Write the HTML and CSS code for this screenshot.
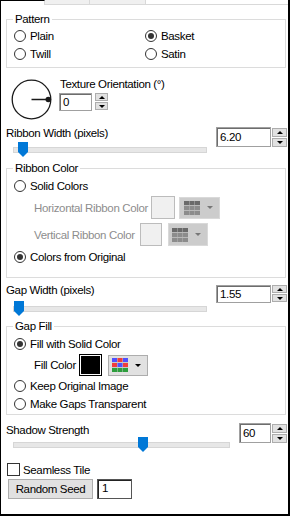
FILE: index.html
```html
<!DOCTYPE html>
<html lang="en">
<head>
    <meta charset="UTF-8">
    <title>Weave Settings</title>
    <link rel="stylesheet" href="styles.css">
</head>
<body>
<div class="panel">
    <div class="tabs">
        <div class="tab active"></div>
        <div class="tab"></div>
        <div class="tab wide"></div>
        <div class="tab-fill"></div>
    </div>

    <fieldset class="group pattern">
        <legend>Pattern</legend>
        <div class="pattern-grid">
            <div class="radio"><span class="dot"></span>Plain</div>
            <div class="radio checked"><span class="dot"></span>Basket</div>
            <div class="radio"><span class="dot"></span>Twill</div>
            <div class="radio"><span class="dot"></span>Satin</div>
        </div>
    </fieldset>

    <div class="orient">
        <svg class="dial" width="42" height="42" viewBox="0 0 42 42">
            <circle cx="21.5" cy="21.5" r="19.3" fill="none" stroke="#1a1a1a" stroke-width="1.3"/>
            <line x1="21.5" y1="21.5" x2="38" y2="21.5" stroke="#1a1a1a" stroke-width="1.5"/>
            <circle cx="38.3" cy="21.5" r="2.8" fill="#1a1a1a"/>
        </svg>
        <div class="orient-body">
            <div class="caption">Texture Orientation (°)</div>
            <div class="spin small">
                <div class="field narrow">0</div>
                <div class="arrows">
                    <span class="arrow up"></span>
                    <span class="arrow down"></span>
                </div>
            </div>
        </div>
    </div>

    <div class="slider-row ribbon">
        <div class="slider-col">
            <div class="caption">Ribbon Width (pixels)</div>
            <div class="track">
                <svg class="thumb" style="left: 5px" width="10" height="15" viewBox="0 0 10 15"><polygon points="0,0 10,0 10,10 5,15 0,10" fill="#0078d7"/></svg>
            </div>
        </div>
        <div class="spin">
            <div class="field wide tall">6.20</div>
            <div class="arrows tall">
                <span class="arrow up"></span>
                <span class="arrow down"></span>
            </div>
        </div>
    </div>

    <fieldset class="group ribbon-color">
        <legend>Ribbon Color</legend>
        <div class="radio"><span class="dot"></span>Solid Colors</div>
        <div class="pick-row first">
            <span class="name h">Horizontal Ribbon Color</span>
            <span class="swatch"></span>
            <span class="menu-btn disabled">
                <svg width="16" height="14" viewBox="0 0 16 14">
                    <rect width="16" height="14" fill="#b9b9b9"/>
                    <rect x="0" y="0" width="5" height="4" fill="#6a6a6a"/><rect x="5.5" y="0" width="5" height="4" fill="#6a6a6a"/><rect x="11" y="0" width="5" height="4" fill="#6a6a6a"/>
                    <rect x="0" y="5" width="5" height="4" fill="#8c8c8c"/><rect x="5.5" y="5" width="5" height="4" fill="#8c8c8c"/><rect x="11" y="5" width="5" height="4" fill="#8c8c8c"/>
                    <rect x="0" y="10" width="5" height="4" fill="#8c8c8c"/><rect x="5.5" y="10" width="5" height="4" fill="#8c8c8c"/><rect x="11" y="10" width="5" height="4" fill="#8c8c8c"/>
                </svg>
                <span class="caret"></span>
            </span>
        </div>
        <div class="pick-row">
            <span class="name v">Vertical Ribbon Color</span>
            <span class="swatch v"></span>
            <span class="menu-btn disabled">
                <svg width="16" height="14" viewBox="0 0 16 14">
                    <rect width="16" height="14" fill="#b9b9b9"/>
                    <rect x="0" y="0" width="5" height="4" fill="#6a6a6a"/><rect x="5.5" y="0" width="5" height="4" fill="#6a6a6a"/><rect x="11" y="0" width="5" height="4" fill="#6a6a6a"/>
                    <rect x="0" y="5" width="5" height="4" fill="#8c8c8c"/><rect x="5.5" y="5" width="5" height="4" fill="#8c8c8c"/><rect x="11" y="5" width="5" height="4" fill="#8c8c8c"/>
                    <rect x="0" y="10" width="5" height="4" fill="#8c8c8c"/><rect x="5.5" y="10" width="5" height="4" fill="#8c8c8c"/><rect x="11" y="10" width="5" height="4" fill="#8c8c8c"/>
                </svg>
                <span class="caret"></span>
            </span>
        </div>
        <div class="radio checked gap-top"><span class="dot"></span>Colors from Original</div>
    </fieldset>

    <div class="slider-row gap">
        <div class="slider-col">
            <div class="caption">Gap Width (pixels)</div>
            <div class="track">
                <svg class="thumb" style="left: 1px" width="10" height="15" viewBox="0 0 10 15"><polygon points="0,0 10,0 10,10 5,15 0,10" fill="#0078d7"/></svg>
            </div>
        </div>
        <div class="spin">
            <div class="field wide">1.55</div>
            <div class="arrows">
                <span class="arrow up"></span>
                <span class="arrow down"></span>
            </div>
        </div>
    </div>

    <fieldset class="group gap-fill">
        <legend>Gap Fill</legend>
        <div class="radio checked"><span class="dot"></span>Fill with Solid Color</div>
        <div class="fill-row">
            <span class="name">Fill Color</span>
            <span class="swatch black"></span>
            <span class="menu-btn">
                <svg width="16" height="14" viewBox="0 0 16 14">
                    <rect width="16" height="14" fill="#c8c8c8"/>
                    <rect x="0" y="0" width="5" height="4" fill="#5050ff"/><rect x="5.5" y="0" width="5" height="4" fill="#f03c3c"/><rect x="11" y="0" width="5" height="4" fill="#5050ff"/>
                    <rect x="0" y="5" width="5" height="4" fill="#f03c3c"/><rect x="5.5" y="5" width="5" height="4" fill="#5050ff"/><rect x="11" y="5" width="5" height="4" fill="#f03c3c"/>
                    <rect x="0" y="10" width="5" height="4" fill="#2e9e3e"/><rect x="5.5" y="10" width="5" height="4" fill="#2e9e3e"/><rect x="11" y="10" width="5" height="4" fill="#2e9e3e"/>
                </svg>
                <span class="caret"></span>
            </span>
        </div>
        <div class="radio gap-top1"><span class="dot"></span>Keep Original Image</div>
        <div class="radio"><span class="dot"></span>Make Gaps Transparent</div>
    </fieldset>

    <div class="slider-row shadow">
        <div class="slider-col">
            <div class="caption">Shadow Strength</div>
            <div class="track">
                <svg class="thumb" style="left: 125px" width="10" height="15" viewBox="0 0 10 15"><polygon points="0,0 10,0 10,10 5,15 0,10" fill="#0078d7"/></svg>
            </div>
        </div>
        <div class="spin">
            <div class="field short tall">60</div>
            <div class="arrows tall">
                <span class="arrow up"></span>
                <span class="arrow down"></span>
            </div>
        </div>
    </div>

    <div class="check-row"><span class="box"></span>Seamless Tile</div>

    <div class="seed-row">
        <span class="button">Random Seed</span>
        <span class="seed">1</span>
    </div>
</div>
</body>
</html>
```

FILE: styles.css
```css
* {
    box-sizing: border-box;
}
body {
    margin: 0;
    font-family: "Liberation Sans", Arial, sans-serif;
    font-size: 11.5px;
    letter-spacing: -0.35px;
    color: #000;
    background: #fff;
}
.panel {
    width: 290px;
    height: 516px;
    border: 2px solid #000;
    border-top: 0;
    border-left-width: 1px;
    background: #fff;
    overflow: hidden;
}

/* tab strip */
.tabs {
    display: flex;
    height: 5px;
}
.tab {
    width: 45px;
    background: #f0f0f0;
    border-right: 1px solid #d9d9d9;
    border-bottom: 1px solid #d9d9d9;
}
.tab.active {
    width: 44px;
    background: #fff;
    border-bottom: 0;
    border-top: 1px solid #000;
}
.tab.wide { width: 56px; }
.tab-fill {
    flex: 1;
    border-bottom: 1px solid #d9d9d9;
}

/* group boxes */
.group {
    margin: 0 2px 0 5px;
    padding: 2px 0 1px 6px;
    border: 1px solid #dcdcdc;
    min-width: 0;
}
.group legend {
    padding: 0 2px;
    line-height: 14px;
}
.pattern {
    margin-top: 7px;
    padding-top: 1px;
    padding-bottom: 4px;
}
.pattern-grid {
    display: grid;
    grid-template-columns: 131px 1fr;
}
.ribbon-color {
    margin-top: 3px;
    padding-bottom: 11px;
}
.gap-fill {
    margin-top: 2px;
}

.radio {
    display: flex;
    align-items: center;
    height: 18px;
    gap: 4px;
    padding-left: 1px;
}
.radio .dot {
    width: 12px;
    height: 12px;
    border: 1px solid #333;
    border-radius: 50%;
    background: #fff;
    display: flex;
    align-items: center;
    justify-content: center;
}
.radio.checked .dot::after {
    content: "";
    width: 6px;
    height: 6px;
    border-radius: 50%;
    background: #333;
}
.gap-top { margin-top: 2px; }
.gap-top1 { margin-top: 1px; }

/* orientation dial */
.orient {
    display: flex;
    margin-top: 10px;
}
.dial {
    margin-left: 9px;
    display: block;
}
.orient-body {
    margin-left: 8px;
}
.orient-body .caption {
    line-height: 13px;
}

/* spinners */
.spin {
    display: flex;
    gap: 1px;
    margin-left: auto;
    margin-right: 1px;
}
.spin.small {
    gap: 3px;
    margin: 2px 0 0 -1px;
}
.field {
    height: 18px;
    border: 1px solid #a0a0a0;
    box-shadow: inset 1px 1px 0 #6d6d6d;
    padding-left: 3px;
    line-height: 17px;
    background: #fff;
}
.field.narrow { width: 33px; }
.field.wide { width: 55px; }
.field.short { width: 32px; }
.field.tall {
    height: 20px;
    line-height: 19px;
}
.arrows {
    display: flex;
    flex-direction: column;
    gap: 1px;
}
.arrows.tall {
    padding-top: 1px;
}
.arrow {
    width: 15px;
    height: 8px;
    background: #e1e1e1;
    border: 1px solid #adadad;
    display: flex;
    align-items: center;
    justify-content: center;
}
.arrows.tall .arrow { height: 9px; }
.spin.small .arrow {
    width: 13px;
}
.arrow::after {
    content: "";
    width: 0;
    height: 0;
    border-left: 3px solid transparent;
    border-right: 3px solid transparent;
}
.arrow.up::after { border-bottom: 3px solid #000; }
.arrow.down::after { border-top: 3px solid #000; }

/* sliders */
.slider-row {
    display: flex;
    align-items: flex-start;
    padding-left: 5px;
}
.slider-col {
    flex: 1;
}
.slider-col .caption {
    line-height: 14px;
}
.track {
    position: relative;
    height: 16px;
    margin: 2px 9px 0 7px;
}
.track::before {
    content: "";
    position: absolute;
    left: 0;
    right: 0;
    top: 5px;
    height: 4px;
    background: #e7e7e7;
    border: 1px solid #d6d6d6;
}
.thumb {
    position: absolute;
    top: 0;
}
.ribbon { margin-top: 6px; }
.ribbon .spin { margin-top: 1px; }
.gap { margin-top: 5px; }
.gap .track { margin-top: 4px; }
.gap .spin { margin-top: 2px; }
.shadow { margin-top: 8px; }
.shadow .track { margin-top: 0; }

/* colour pickers */
.pick-row, .fill-row {
    display: flex;
    align-items: center;
    padding-left: 21px;
}
.pick-row {
    height: 23px;
    margin-top: 4px;
    color: #8d8d8d;
}
.pick-row.first { margin-top: 1px; }
.name.h { width: 117px; }
.name.v { width: 106px; }
.swatch {
    width: 24px;
    height: 23px;
    border: 1px solid #bcbcbc;
    background: #f0f0f0;
}
.swatch.v { width: 22px; }
.menu-btn {
    display: flex;
    align-items: center;
    margin-left: 4px;
    width: 41px;
    height: 22px;
    padding-left: 4px;
    background: #e1e1e1;
    border: 1px solid #adadad;
}
.menu-btn.disabled {
    background: #cccccc;
    border-color: #d9d9d9;
}
.pick-row + .pick-row .menu-btn {
    margin-left: 6px;
    width: 40px;
    height: 23px;
    padding-left: 3px;
}
.caret {
    margin-left: 7px;
    width: 0;
    height: 0;
    border-left: 3px solid transparent;
    border-right: 3px solid transparent;
    border-top: 3px solid #000;
}
.menu-btn.disabled .caret { border-top-color: #777; }

.fill-row {
    height: 22px;
    margin-top: 1px;
}
.fill-row .name { width: 45px; }
.swatch.black {
    width: 23px;
    height: 22px;
    border: 1px solid #000;
    box-shadow: inset 0 0 0 1px #fff;
    background: #000;
}
.fill-row .menu-btn {
    margin-left: 6px;
    width: 40px;
    height: 21px;
    padding-left: 3px;
}

/* bottom controls */
.check-row {
    display: flex;
    align-items: center;
    gap: 3px;
    height: 15px;
    margin-top: 9px;
    padding-left: 6px;
}
.check-row .box {
    width: 13px;
    height: 13px;
    border: 1px solid #333;
    background: #fff;
}
.seed-row {
    display: flex;
    margin-top: 2px;
    padding-left: 7px;
}
.button {
    width: 85px;
    height: 20px;
    line-height: 18px;
    text-align: center;
    background: #e1e1e1;
    border: 1px solid #adadad;
}
.seed {
    margin-left: 4px;
    width: 35px;
    height: 20px;
    line-height: 17px;
    padding-left: 4px;
    border: 1px solid #555;
    box-shadow: inset 1px 1px 0 #222;
}
```
